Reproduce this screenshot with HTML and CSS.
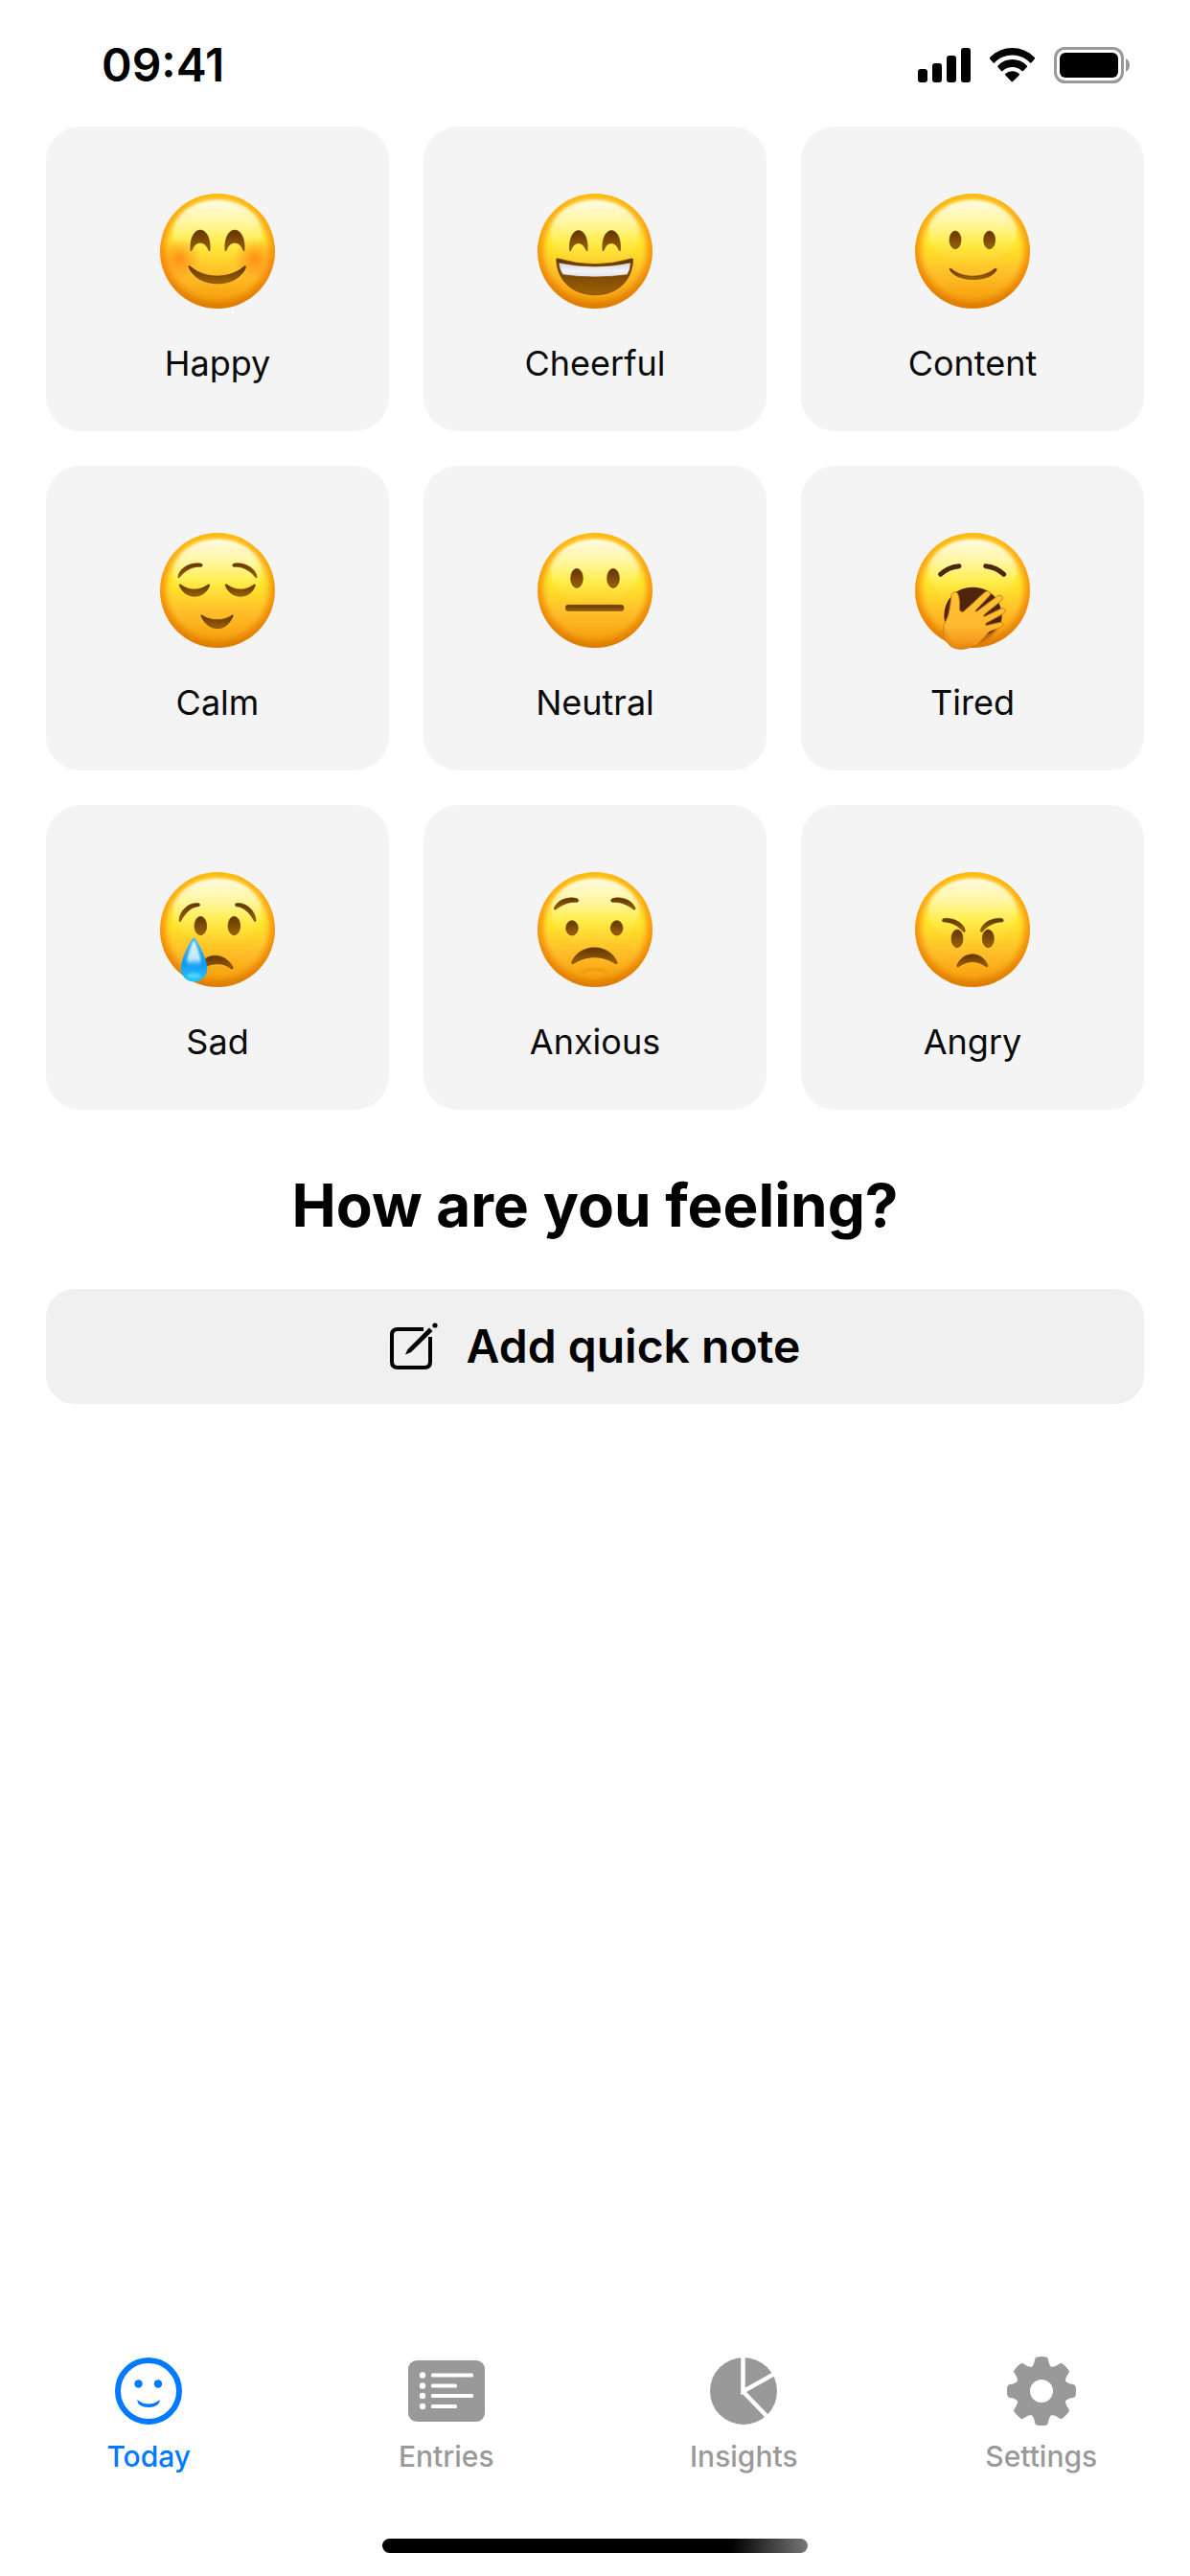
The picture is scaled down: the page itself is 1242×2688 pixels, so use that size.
FILE: index.html
```html
<!DOCTYPE html>
<html lang="en">
  <head>
    <meta charset="UTF-8" />
    <meta name="viewport" content="width=device-width, initial-scale=1.0" />
    <title>Today - Mood Journal</title>
    <link rel="stylesheet" href="styles.css">
  </head>
  <body>
    <!-- Shared emoji parts -->
    <svg class="defs" width="0" height="0" aria-hidden="true">
      <defs>
        <linearGradient id="rim" x1="0" y1="0" x2="0" y2="1">
          <stop offset="0" stop-color="#ffb80c" />
          <stop offset="0.5" stop-color="#fb930c" />
          <stop offset="1" stop-color="#dc7c02" />
        </linearGradient>
        <linearGradient id="skin" x1="0" y1="0" x2="0" y2="1">
          <stop offset="0" stop-color="#ffe45a" />
          <stop offset="0.2" stop-color="#fff176" />
          <stop offset="0.42" stop-color="#ffe92c" />
          <stop offset="0.72" stop-color="#ffbf2b" />
          <stop offset="1" stop-color="#f69f0c" />
        </linearGradient>
        <linearGradient id="shine" x1="0" y1="0" x2="0" y2="1">
          <stop offset="0" stop-color="#fffef0" stop-opacity="0.95" />
          <stop offset="0.5" stop-color="#fffbc0" stop-opacity="0.35" />
          <stop offset="1" stop-color="#fff176" stop-opacity="0" />
        </linearGradient>
        <linearGradient id="ink" x1="0" y1="0" x2="0" y2="1">
          <stop offset="0" stop-color="#623500" />
          <stop offset="1" stop-color="#9d6207" />
        </linearGradient>
        <linearGradient id="teeth" x1="0" y1="0" x2="0" y2="1">
          <stop offset="0" stop-color="#d6d8dc" />
          <stop offset="0.6" stop-color="#f3f4f6" />
          <stop offset="1" stop-color="#dfe0e4" />
        </linearGradient>
        <linearGradient id="tear" x1="0" y1="0" x2="0" y2="1">
          <stop offset="0" stop-color="#4fb6f2" />
          <stop offset="0.6" stop-color="#109bf0" />
          <stop offset="1" stop-color="#27c4fb" />
        </linearGradient>
        <linearGradient id="tearShine" x1="0" y1="0" x2="0" y2="1">
          <stop offset="0" stop-color="#d8f3ff" />
          <stop offset="0.7" stop-color="#bfeaff" />
          <stop offset="1" stop-color="#6fd0ff" stop-opacity="0" />
        </linearGradient>
        <linearGradient id="hand" x1="0" y1="0" x2="0" y2="1">
          <stop offset="0" stop-color="#ffc437" />
          <stop offset="0.6" stop-color="#ffb92f" />
          <stop offset="1" stop-color="#ee8d14" />
        </linearGradient>
        <radialGradient id="blush">
          <stop offset="0" stop-color="#ff7a12" stop-opacity="0.75" />
          <stop offset="1" stop-color="#ff7a12" stop-opacity="0" />
        </radialGradient>
        <filter id="soft" x="-20%" y="-20%" width="140%" height="140%">
          <feGaussianBlur stdDeviation="10" />
        </filter>
        <filter id="edge" x="-20%" y="-20%" width="140%" height="140%">
          <feGaussianBlur stdDeviation="3" />
        </filter>
        <clipPath id="round"><circle cx="180" cy="180" r="180" /></clipPath>
        <g id="face">
          <circle cx="180" cy="180" r="180" fill="url(#rim)" />
          <g clip-path="url(#round)">
            <ellipse cx="180" cy="178" rx="162" ry="160" fill="url(#skin)" filter="url(#soft)" />
            <ellipse cx="180" cy="122" rx="138" ry="102" fill="url(#shine)" filter="url(#edge)" />
          </g>
        </g>
      </defs>
    </svg>

    <div class="app">
      <header class="status-bar">
        <time class="clock">09:41</time>
        <div class="status-icons">
          <svg width="55" height="36" viewBox="0 0 55 36" aria-hidden="true">
            <rect x="0" y="22" width="10" height="14" rx="3" />
            <rect x="15" y="16" width="10" height="20" rx="3" />
            <rect x="30" y="8" width="10" height="28" rx="3" />
            <rect x="45" y="0" width="10" height="36" rx="3" />
          </svg>
          <svg width="49" height="36" viewBox="0 -0.2 17 11.9" preserveAspectRatio="none" aria-hidden="true">
            <path d="M8.5 2.3c2.4 0 4.7.9 6.4 2.6.1.1.3.1.5 0l1.2-1.3a.4.4 0 0 0 0-.5c-4.5-4.4-11.7-4.4-16.2 0a.4.4 0 0 0 0 .5l1.2 1.3c.1.1.4.1.5 0 1.7-1.7 4-2.6 6.4-2.6z" />
            <path d="M8.5 6.4c1.3 0 2.6.5 3.5 1.3.2.2.4.2.5 0l1.3-1.3a.4.4 0 0 0 0-.5c-3-2.8-7.6-2.8-10.5 0a.4.4 0 0 0 0 .5l1.2 1.3c.1.2.4.2.5 0 1-.8 2.2-1.3 3.5-1.3z" />
            <path d="M11 9.2a.4.4 0 0 0 0-.5c-1.4-1.2-3.5-1.2-5 0a.4.4 0 0 0 0 .5l2.2 2.2c.1.1.4.1.5 0z" />
          </svg>
          <svg width="80" height="38" viewBox="0 0 80 38" aria-hidden="true">
            <rect x="1.5" y="1.5" width="70" height="35" rx="10" fill="none" stroke="#999" stroke-width="3" />
            <rect x="6" y="6" width="61" height="26" rx="6" />
            <path d="M75 12q4 2 4 7t-4 7z" fill="#999" />
          </svg>
        </div>
      </header>

      <main>
        <div class="moods">
          <button type="button" class="mood">
            <svg class="emoji" viewBox="0 0 360 360" aria-hidden="true">
              <use href="#face" />
              <circle cx="60" cy="204" r="68" fill="url(#blush)" />
              <circle cx="298" cy="204" r="68" fill="url(#blush)" />
              <g class="ink" fill="url(#ink)">
                <path d="M96 178C90 93 162 93 156 178Q155 182 152 176C140 146 112 146 100 176Q97 182 96 178z" />
                <path d="M204 178C198 93 270 93 264 178Q263 182 260 176C248 146 220 146 208 176Q205 182 204 178z" />
                <path d="M89 228Q91 224 96 229C140 268 218 268 262 229Q268 224 269 230C244 299 114 299 89 228z" />
              </g>
            </svg>
            <span class="mood-name">Happy</span>
          </button>

          <button type="button" class="mood">
            <svg class="emoji" viewBox="0 0 360 360" aria-hidden="true">
              <use href="#face" />
              <g class="ink" fill="url(#ink)">
                <path d="M101 178C95 95 162 95 156 178Q155 182 152 176C140 148 116 148 105 176Q102 182 101 178z" />
                <path d="M204 178C198 95 265 95 259 178Q258 182 255 176C243 148 219 148 208 176Q205 182 204 178z" />
                <path d="M59 205Q60 202 66 204Q180 238 292 204Q299 202 299 206C297 278 244 317 180 317S61 278 59 205z" />
              </g>
              <path d="M66 216Q180 240 292 216Q291 240 281 254Q180 268 79 254Q68 238 66 216z" fill="url(#teeth)" stroke="#7a4600" stroke-width="2" />
            </svg>
            <span class="mood-name">Cheerful</span>
          </button>

          <button type="button" class="mood">
            <svg class="emoji" viewBox="0 0 360 360" aria-hidden="true">
              <use href="#face" />
              <g class="ink" fill="url(#ink)">
                <ellipse cx="126" cy="145" rx="18" ry="28" />
                <ellipse cx="233" cy="145" rx="18" ry="28" />
                <path d="M108 237Q108 232 114 236C150 266 212 266 248 236Q255 232 256 238C238 279 128 279 108 237z" />
              </g>
            </svg>
            <span class="mood-name">Content</span>
          </button>

          <button type="button" class="mood">
            <svg class="emoji" viewBox="0 0 360 360" aria-hidden="true">
              <use href="#face" />
              <g class="ink" fill="url(#ink)">
                <path d="M57 138C60 110 98 90 130 97Q136 102 130 106C100 104 78 118 61 139Q57 143 57 138z" />
                <path d="M303 138C300 110 262 90 230 97Q224 102 230 106C260 104 282 118 299 139Q303 143 303 138z" />
                <path d="M60 163Q61 159 66 163C90 182 124 182 149 163Q156 159 155 165C140 210 76 210 60 163z" />
                <path d="M204 163Q205 159 211 163C236 182 268 182 293 163Q299 159 298 165C284 210 219 210 204 163z" />
                <path d="M128 259Q129 255 135 260C160 276 200 276 222 260Q229 255 229 260C208 312 150 312 128 259z" />
              </g>
            </svg>
            <span class="mood-name">Calm</span>
          </button>

          <button type="button" class="mood">
            <svg class="emoji" viewBox="0 0 360 360" aria-hidden="true">
              <use href="#face" />
              <g class="ink" fill="url(#ink)">
                <ellipse cx="123" cy="142" rx="19" ry="30" />
                <ellipse cx="237" cy="142" rx="19" ry="30" />
                <rect x="88" y="226" width="182" height="18" rx="8" />
              </g>
            </svg>
            <span class="mood-name">Neutral</span>
          </button>

          <button type="button" class="mood">
            <svg class="emoji" viewBox="0 0 360 360" aria-hidden="true">
              <use href="#face" />
              <path d="M80 130Q102 108 138 104M221 104Q256 108 278 130" fill="none" stroke="#4d260b" stroke-width="15" stroke-linecap="round" />
              <path d="M150 350Q240 350 266 285L200 280z" fill="#b05a0a" opacity="0.75" filter="url(#edge)" />
              <path d="M91 262C91 204 132 170 181 170S272 206 272 262C272 296 240 322 200 322L96 300z" fill="#4d260b" />
              <g transform="translate(-57 -48)">
                <path d="M171 242Q178 229 189 236Q198 246 196 288Q201 300 211 293L272 237Q285 226 291 234Q296 240 289 246L246 291Q246 296 251 294L314 247Q326 240 331 249Q332 257 325 262L272 305Q270 311 276 310L325 286Q338 281 340 291Q339 298 330 303L280 330Q274 336 281 338L320 329Q332 327 333 335Q331 342 322 345L291 356C276 368 262 395 236 404C206 416 176 415 160 394C144 374 144 350 150 330C164 310 167 280 171 242z" fill="url(#hand)" stroke="#d77c12" stroke-width="3" />
                <path d="M151 352Q154 384 178 400Q206 412 240 396" fill="none" stroke="#dd7410" stroke-width="8" opacity="0.5" filter="url(#edge)" />
              </g>
            </svg>
            <span class="mood-name">Tired</span>
          </button>

          <button type="button" class="mood">
            <svg class="emoji" viewBox="0 0 360 360" aria-hidden="true">
              <use href="#face" />
              <g class="ink" fill="url(#ink)">
                <path d="M60 152C62 118 92 94 122 98Q128 102 122 107C98 108 78 128 65 153Q60 158 60 152z" />
                <path d="M300 152C298 118 268 94 238 98Q232 102 238 107C262 108 282 128 295 153Q300 158 300 152z" />
                <ellipse cx="127" cy="168" rx="19" ry="29" />
                <ellipse cx="232" cy="168" rx="19" ry="29" />
                <path d="M132 285C146 252 206 252 228 298Q230 306 222 302C200 282 168 284 140 296z" />
              </g>
              <path d="M106 205C112 205 148 270 148 302A41.500 41.500 0 0 1 65 302C65 270 100 205 106 205z" fill="url(#tear)" />
              <path d="M106 214C111 218 128 266 128 284C128 300 84 300 84 284C84 266 101 218 106 214z" fill="url(#tearShine)" filter="url(#edge)" />
              <ellipse cx="106" cy="324" rx="22" ry="9" fill="#54dcff" opacity="0.8" filter="url(#edge)" />
            </svg>
            <span class="mood-name">Sad</span>
          </button>

          <button type="button" class="mood">
            <svg class="emoji" viewBox="0 0 360 360" aria-hidden="true">
              <use href="#face" />
              <path d="M136 314Q180 292 224 314" fill="none" stroke="#ec8a08" stroke-width="8" opacity="0.6" filter="url(#edge)" />
              <g class="ink" fill="url(#ink)">
                <path d="M52 113C64 84 100 76 124 83Q132 88 125 94C98 92 76 102 57 117Q51 119 52 113z" />
                <path d="M306 113C294 84 258 76 234 83Q226 88 233 94C260 92 282 102 301 117Q307 119 306 113z" />
                <ellipse cx="108" cy="175" rx="19" ry="23" />
                <ellipse cx="248" cy="175" rx="19" ry="23" />
                <path d="M107 283C130 221 226 221 249 283Q250 290 243 286C204 260 152 260 113 286Q106 290 107 283z" />
              </g>
            </svg>
            <span class="mood-name">Anxious</span>
          </button>

          <button type="button" class="mood">
            <svg class="emoji" viewBox="0 0 360 360" aria-hidden="true">
              <use href="#face" />
              <g class="ink" fill="url(#ink)">
                <ellipse cx="132" cy="208" rx="18" ry="28" />
                <ellipse cx="229" cy="208" rx="18" ry="28" />
                <path d="M85 151Q86 144 100 145C130 146 154 164 157 184Q156 191 150 185C136 168 112 156 91 156Q85 156 85 151z" />
                <path d="M277 151Q276 144 262 145C232 146 208 164 205 184Q206 191 212 185C226 168 250 156 271 156Q277 156 277 151z" />
                <path d="M132 292C150 246 210 246 227 292Q228 299 221 295C196 276 164 276 138 295Q131 299 132 292z" />
              </g>
            </svg>
            <span class="mood-name">Angry</span>
          </button>
        </div>

        <h1>How are you feeling?</h1>

        <button type="button" class="note-button">
          <svg width="50" height="50" viewBox="0 0 50 50" aria-hidden="true">
            <path d="M35 7H8Q2 7 2 13V41Q2 47 8 47H36Q42 47 42 41V15" fill="none" stroke="currentColor" stroke-width="4" />
            <path d="M16 33.500L18.500 28L41 5.500L44.500 9L22 31z" />
            <circle cx="47" cy="3" r="2.600" />
          </svg>
          Add quick note
        </button>
      </main>

      <footer>
        <nav class="tabs">
          <a href="#today" class="tab active" aria-current="page">
            <span class="tab-icon">
              <svg width="70" height="70" viewBox="0 0 70 70" aria-hidden="true">
                <circle cx="35" cy="35" r="32" fill="none" stroke="currentColor" stroke-width="6" />
                <circle cx="24.500" cy="27.500" r="4.200" />
                <circle cx="45" cy="27.500" r="4.200" />
                <path d="M23 44Q35 53 47 44Q46 52 35 52T23 44z" />
              </svg>
            </span>
            Today
          </a>
          <a href="#entries" class="tab">
            <span class="tab-icon">
              <svg width="80" height="64" viewBox="0 0 80 64" aria-hidden="true">
                <rect width="80" height="64" rx="9" />
                <g fill="#fff">
                  <circle cx="15" cy="15.500" r="3.200" />
                  <circle cx="15" cy="26.500" r="3.200" />
                  <circle cx="15" cy="37" r="3.200" />
                  <circle cx="15" cy="48" r="3.200" />
                  <rect x="24" y="13.500" width="44" height="4" rx="1.500" />
                  <rect x="24" y="24.500" width="27" height="4" rx="1.500" />
                  <rect x="24" y="35" width="44" height="4" rx="1.500" />
                  <rect x="24" y="46" width="27" height="4" rx="1.500" />
                </g>
              </svg>
            </span>
            Entries
          </a>
          <a href="#insights" class="tab">
            <span class="tab-icon">
              <svg width="70" height="70" viewBox="0 0 70 70" aria-hidden="true">
                <circle cx="35" cy="35" r="35" />
                <path d="M34.500 -2V35.500L70 15.500M34.500 35.500L62 64" fill="none" stroke="#fff" stroke-width="4.500" />
              </svg>
            </span>
            Insights
          </a>
          <a href="#settings" class="tab">
            <span class="tab-icon">
              <svg width="72" height="72" viewBox="0 0 72 72" aria-hidden="true">
                <defs>
                  <path id="tooth" d="M31 .5Q36 -.5 41 .5Q42.500 1 43 3Q43.500 10 49 13V20H23V13Q28.500 10 29 3Q29.500 1 31 .5z" />
                </defs>
                <circle cx="36" cy="36" r="19" fill="none" stroke="currentColor" stroke-width="14" />
                <use href="#tooth" />
                <use href="#tooth" transform="rotate(45 36 36)" />
                <use href="#tooth" transform="rotate(90 36 36)" />
                <use href="#tooth" transform="rotate(135 36 36)" />
                <use href="#tooth" transform="rotate(180 36 36)" />
                <use href="#tooth" transform="rotate(225 36 36)" />
                <use href="#tooth" transform="rotate(270 36 36)" />
                <use href="#tooth" transform="rotate(315 36 36)" />
              </svg>
            </span>
            Settings
          </a>
        </nav>
        <div class="home-indicator"></div>
      </footer>
    </div>
  </body>
</html>
```

FILE: styles.css
```css
:root {
  --primary: #007aff;
  --text: #000000;
  --muted: #999999;
  --background: #ffffff;
  --card: #f4f4f4;
  --button: #f0f0f0;
  --side: 48px;
  --gap: 36px;
}

* {
  margin: 0;
  padding: 0;
  box-sizing: border-box;
}

body {
  font-family: 'Inter', 'Roboto', sans-serif;
  background-color: var(--background);
  color: var(--text);
}

svg {
  display: block;
  flex-shrink: 0;
  fill: currentColor;
}

button {
  border: none;
  font-family: inherit;
  color: inherit;
  cursor: pointer;
}

.defs {
  position: absolute;
}

.app {
  display: flex;
  flex-direction: column;
  min-height: 100vh;
}

.status-bar {
  display: flex;
  justify-content: space-between;
  align-items: center;
  padding: 38px 62px 34px 106px;
}

.clock {
  font-size: 48px;
  line-height: 60px;
  font-weight: 600;
}

.status-icons {
  display: flex;
  align-items: center;
  gap: 19px;
}

main {
  padding: 0 var(--side);
}

.moods {
  display: grid;
  grid-template-columns: repeat(3, 1fr);
  gap: var(--gap);
}

.mood {
  display: flex;
  flex-direction: column;
  align-items: center;
  gap: 35px;
  padding: 70px 0 49px;
  background-color: var(--card);
  border-radius: 36px;
}

.emoji {
  width: 120px;
  height: 120px;
  overflow: visible;
}

.ink {
  stroke: #6b3c02;
  stroke-width: 2px;
}

.mood-name {
  font-size: 36px;
  line-height: 44px;
  color: #0a0a0a;
}

h1 {
  margin: 60px 0 47px;
  font-size: 62px;
  line-height: 80px;
  font-weight: 700;
  text-align: center;
}

.note-button {
  display: flex;
  justify-content: center;
  align-items: center;
  gap: 30px;
  width: 100%;
  padding: 30px;
  background-color: var(--button);
  border-radius: 30px;
  font-size: 48px;
  line-height: 60px;
  font-weight: 600;
}

footer {
  margin-top: auto;
  padding-bottom: 24px;
}

.tabs {
  display: grid;
  grid-template-columns: repeat(4, 1fr);
}

.tab {
  display: flex;
  flex-direction: column;
  align-items: center;
  gap: 14px;
  color: var(--muted);
  font-size: 30px;
  line-height: 36px;
  font-weight: 500;
  text-decoration: none;
}

.tab.active {
  color: var(--primary);
}

.tab-icon {
  display: flex;
  align-items: center;
  height: 72px;
}

.home-indicator {
  width: 444px;
  max-width: 60%;
  height: 15px;
  margin: 68px auto 0;
  border-radius: 8px;
  background: linear-gradient(to right, #000 82%, #777);
}
```
